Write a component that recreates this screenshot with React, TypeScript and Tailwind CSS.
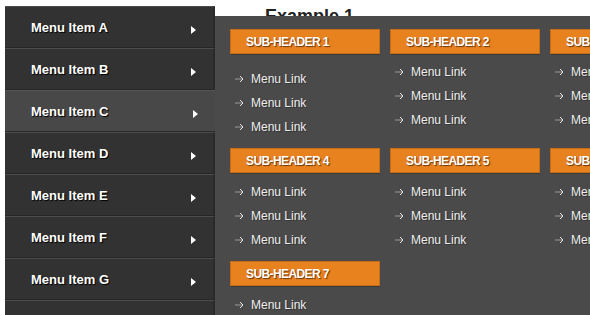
import React from 'react';

const menuItems = ['Menu Item A', 'Menu Item B', 'Menu Item C', 'Menu Item D', 'Menu Item E', 'Menu Item F', 'Menu Item G', ''];

interface Section {
  title: string;
  links: number;
  top: string;
}

const rows: Section[][] = [
  [
    { title: 'Sub-Header 1', links: 3, top: 'mt-[13px]' },
    { title: 'Sub-Header 2', links: 3, top: 'mt-[6px]' },
    { title: 'Sub-Header 3', links: 3, top: 'mt-[6px]' },
  ],
  [
    { title: 'Sub-Header 4', links: 3, top: 'mt-[7px]' },
    { title: 'Sub-Header 5', links: 3, top: 'mt-[7px]' },
    { title: 'Sub-Header 6', links: 3, top: 'mt-[7px]' },
  ],
  [{ title: 'Sub-Header 7', links: 1, top: 'mt-[7px]' }],
];

function LinkArrow() {
  return (
    <svg width="10" height="8" viewBox="0 0 10 8" className="shrink-0">
      <path d="M0.5 4H7.5" stroke="#e8e8e8" strokeWidth="1" strokeDasharray="1 1" />
      <path d="M5 1L8 4L5 7" stroke="#e8e8e8" strokeWidth="1" fill="none" />
    </svg>
  );
}

function SubSection({ section }: { section: Section }) {
  return (
    <div className="w-[150px] shrink-0">
      <div className="h-[25px] bg-[#e8821f] border border-[#c56c17] shadow-[0_1px_0_#3a3a3a] flex items-center pl-[15px]">
        <span className="text-[12px] font-bold uppercase tracking-[-0.6px] text-white [text-shadow:1px_1px_1px_#6a3606]">
          {section.title}
        </span>
      </div>
      <ul className={section.top}>
        {Array.from({ length: section.links }).map((_, i) => (
          <li key={i} className="h-[24px] flex items-center gap-[6px] pl-[5px] text-[12px] text-[#eeeeee] [text-shadow:1px_1px_0_#333]">
            <LinkArrow />
            <span>Menu Link</span>
          </li>
        ))}
      </ul>
    </div>
  );
}

export default function App() {
  return (
    <div className="w-[590px] h-[315px] overflow-hidden bg-white flex pt-[6px] pl-[5px] font-['Liberation_Sans',Arial,sans-serif]">
      <nav className="w-[210px] shrink-0 flex flex-col bg-[#333333]">
        {menuItems.map((label, i) => {
          const active = i === 2;
          return (
            <div
              key={i}
              className={
                'h-[42px] shrink-0 flex items-center justify-between pl-[26px] pr-[17px] pt-[2px] border-t border-b ' +
                (active
                  ? 'bg-[#484848] border-t-[#555555] border-b-[#2a2a2a]'
                  : 'bg-[#323232] border-t-[#4c4c4c] border-b-[#262626] border-r-2 border-r-[#2a2a2a]')
              }
            >
              <span className="text-[13px] font-bold text-white [text-shadow:1px_1px_1px_#000]">{label}</span>
              {label && (
                <svg width="5" height="8" viewBox="0 0 5 8" className="mt-[3px]">
                  <path d="M0 0L5 4L0 8Z" fill="#ffffff" />
                </svg>
              )}
            </div>
          );
        })}
      </nav>

      <div className="flex-1 min-w-0 flex flex-col -mt-[6px]">
        <div className="h-[16px] shrink-0 overflow-hidden pl-[50px] pt-[6px]">
          <h2 className="text-[18px] leading-[20px] font-bold text-[#222222]">Example 1</h2>
        </div>
        <div className="flex-1 bg-[#4a4a4a] pl-[15px] pt-[13px] overflow-hidden">
          <div className="flex flex-col gap-[9px]">
            {rows.map((row, r) => (
              <div key={r} className="flex items-start gap-[10px]">
                {row.map(s => (
                  <SubSection key={s.title} section={s} />
                ))}
              </div>
            ))}
          </div>
        </div>
      </div>
    </div>
  );
}
